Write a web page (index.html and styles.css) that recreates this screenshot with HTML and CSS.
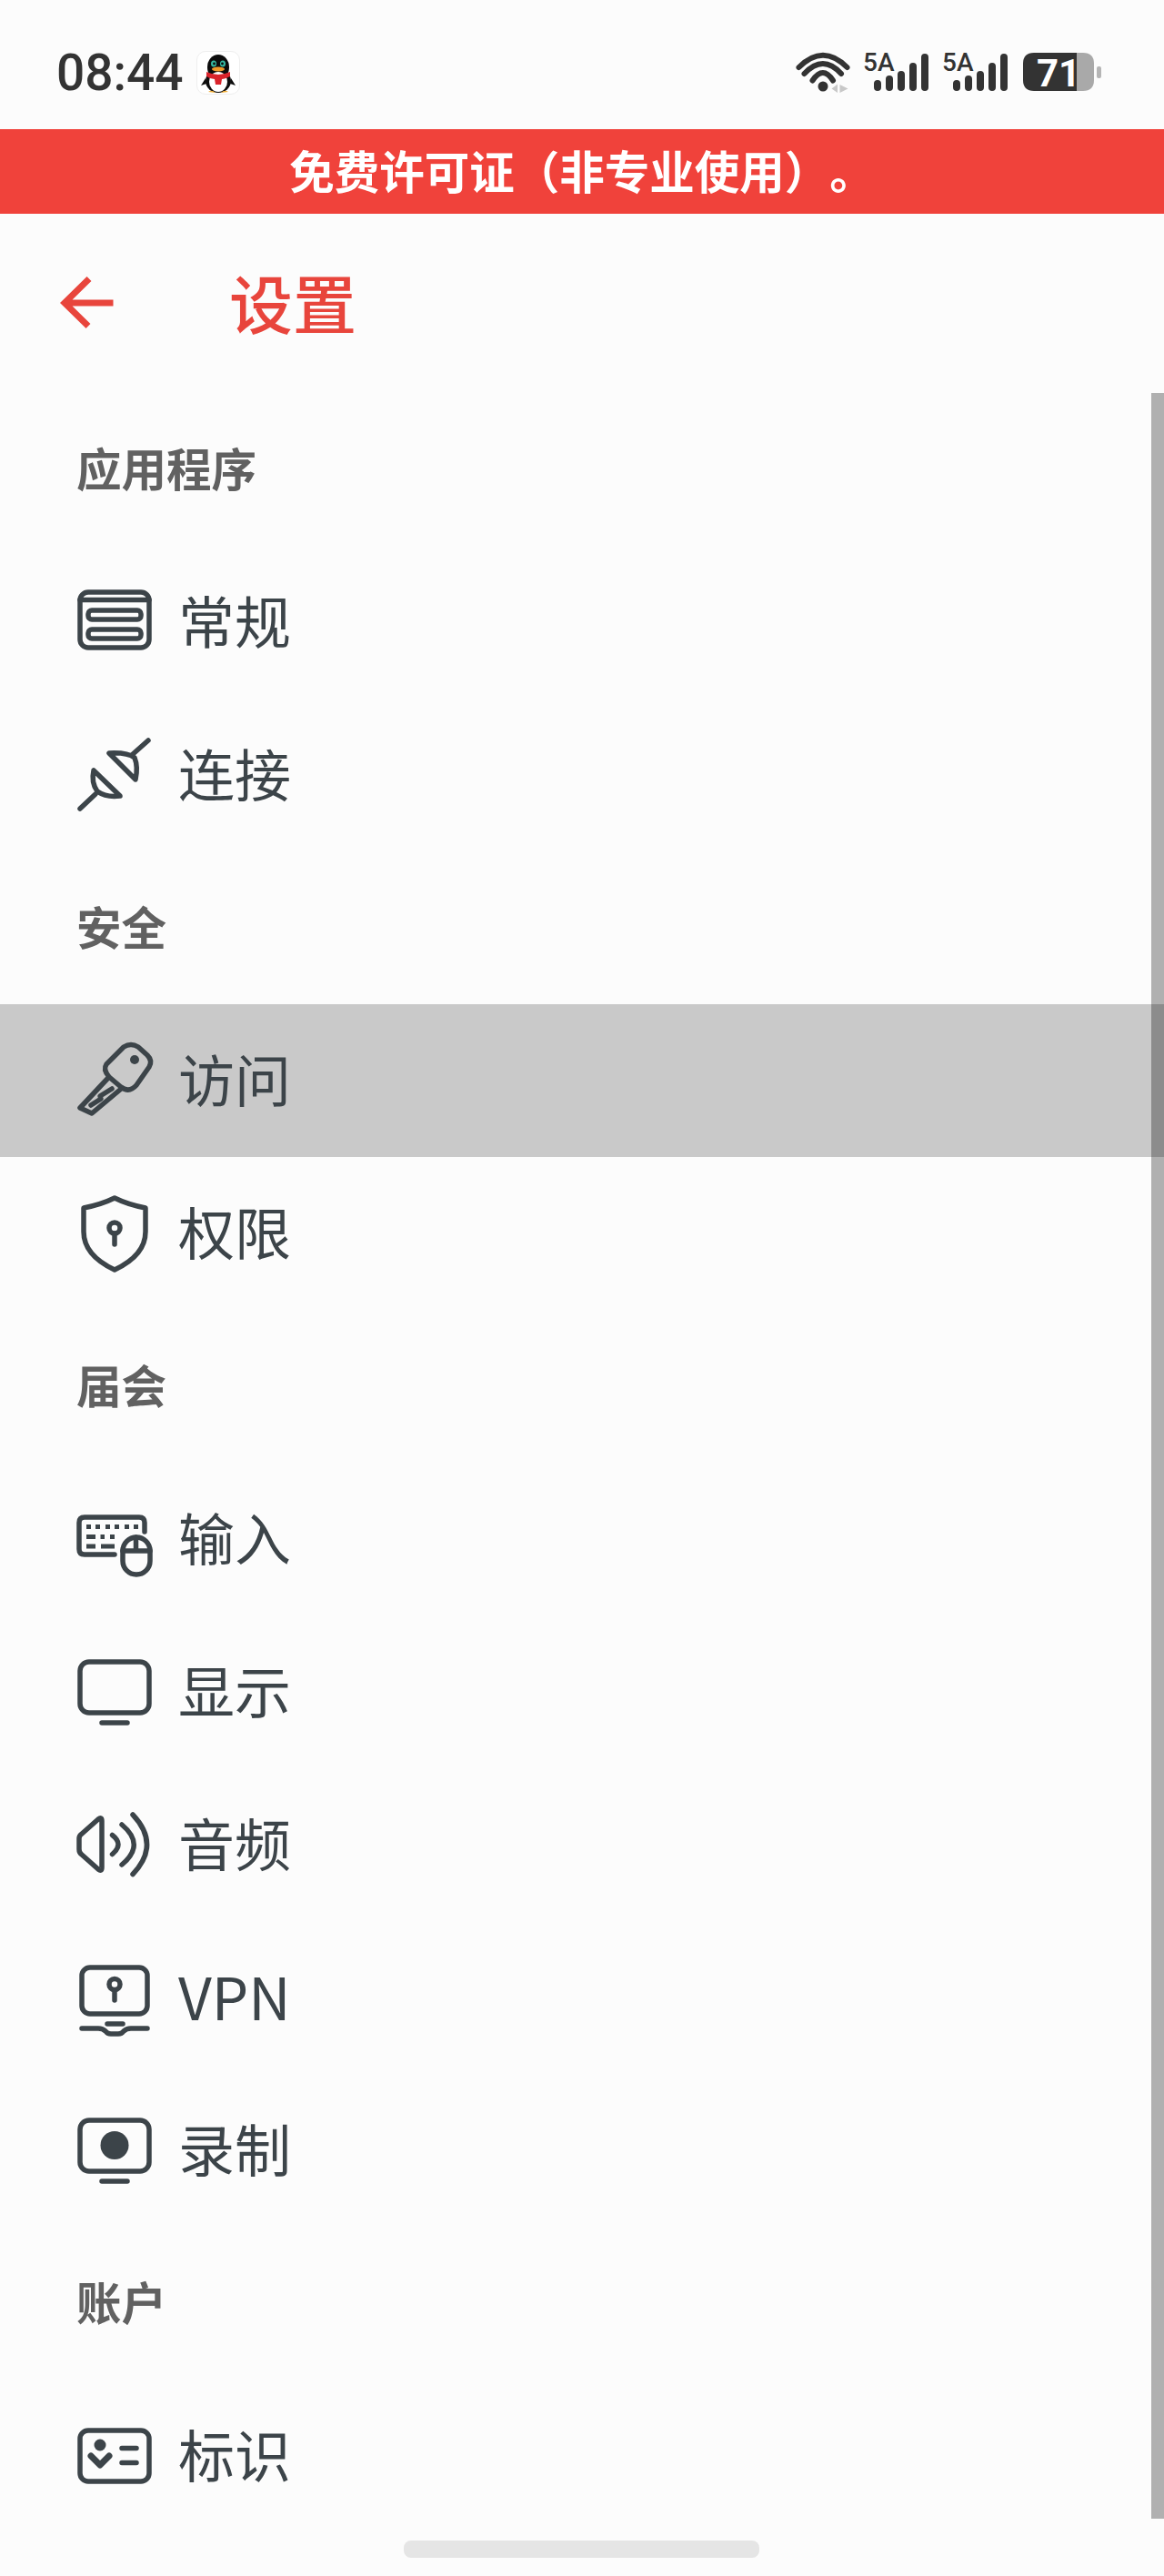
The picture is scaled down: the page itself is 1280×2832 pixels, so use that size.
FILE: index.html
```html
<!DOCTYPE html>
<html lang="zh-CN">
<head>
  <meta charset="UTF-8">
  <meta name="viewport" content="width=device-width, initial-scale=1.0">
  <title>设置</title>
  <link rel="stylesheet" href="styles.css">
</head>
<body>
  <div class="statusBar">
    <div class="statusLeft">
      <span class="clock">08:44</span>
      <div class="appBadge">
        <svg width="48" height="48" viewBox="0 0 48 48">
          <ellipse cx="24" cy="18" rx="12" ry="14" fill="#0c0c0c"/>
          <ellipse cx="24" cy="33" rx="14" ry="13" fill="#0c0c0c"/>
          <path d="M10 30 L5 38 L11 36Z M38 30 L43 38 L37 36Z" fill="#0c0c0c"/>
          <ellipse cx="24" cy="34" rx="10" ry="11" fill="#fff"/>
          <ellipse cx="19" cy="14" rx="3" ry="3.5" fill="#35b8a0"/>
          <ellipse cx="29" cy="14" rx="3" ry="3.5" fill="#35b8a0"/>
          <circle cx="19.500" cy="14" r="1.4" fill="#0c0c0c"/>
          <circle cx="28.500" cy="14" r="1.4" fill="#0c0c0c"/>
          <ellipse cx="24" cy="20" rx="7" ry="2.6" fill="#f09a28"/>
          <path d="M11 23 Q24 29 37 23 L37 28 Q31 31 28 31 L27 37 L21 37 L20 31 Q15 31 11 28Z" fill="#d9232b"/>
          <path d="M13 45 Q17 42 21 46Z M27 46 Q31 42 35 45Z" fill="#f2b03a"/>
        </svg>
      </div>
    </div>
    <div class="statusRight">
      <svg class="wifiIcon" width="64" height="60" viewBox="0 0 64 60">
        <g fill="none" stroke="#333" stroke-width="6" stroke-linecap="round">
          <path d="M5.500 24 Q32 -2.600 58.500 24"/>
          <path d="M11.500 31 Q32 9 52 31"/>
          <path d="M20.500 38.500 Q32 21.500 43 38.500"/>
        </g>
        <circle cx="32" cy="45" r="5.500" fill="#333"/>
        <path d="M41.500 47.500 L48 42.500 V52Z M50.500 43 V52 L59.500 47.500Z" fill="#c8c8c8"/>
      </svg>
      <svg class="signalIcon" width="80" height="60" viewBox="0 0 80 60">
        <text class="networkLabel" x="3" y="28">5A</text>
        <g stroke="#333" stroke-width="8" stroke-linecap="round">
          <path d="M19 42 V46 M32 37 V46 M45 32 V46 M58 23 V46 M71 13 V46"/>
        </g>
      </svg>
      <svg class="signalIcon" width="80" height="60" viewBox="0 0 80 60">
        <text class="networkLabel" x="3" y="28">5A</text>
        <g stroke="#333" stroke-width="8" stroke-linecap="round">
          <path d="M19 42 V46 M32 37 V46 M45 32 V46 M58 23 V46 M71 13 V46"/>
        </g>
      </svg>
      <svg class="batteryIcon" width="92" height="60" viewBox="0 0 92 60">
        <path d="M15 8 H62 V50 H15 Q3 50 3 38 V20 Q3 8 15 8Z" fill="#333"/>
        <path d="M62 8 H69 Q81 8 81 20 V38 Q81 50 69 50 H62Z" fill="#a9a9a9"/>
        <rect x="84" y="23" width="5" height="13" rx="2" fill="#b5b5b5"/>
        <text class="batteryLevel" x="18" y="45">71</text>
      </svg>
    </div>
  </div>

  <div class="licenseBanner">免费许可证（非专业使用）。</div>

  <div class="pageHeader">
    <svg class="backArrow" width="72" height="72" viewBox="0 0 72 72">
      <path d="M64.500 35 H11 M38 8.500 L11 35 L37 60.500" fill="none" stroke="#e8453c" stroke-width="7"/>
    </svg>
    <h1 class="pageTitle">设置</h1>
  </div>

  <div class="settingsList">
    <div class="sectionLabel">应用程序</div>

    <div class="settingsRow">
      <svg class="icon" viewBox="0 0 96 96">
        <rect x="10" y="15" width="76" height="61" rx="9"/>
        <path d="M10 23.500 H86"/>
        <rect x="19" y="35" width="58" height="10" rx="4"/>
        <rect x="19" y="56" width="58" height="10" rx="4"/>
      </svg>
      <span>常规</span>
    </div>

    <div class="settingsRow">
      <svg class="icon" viewBox="0 0 96 96">
        <path d="M42 24 Q62 23 70 29 Q74 39 71 53Z"/>
        <path d="M85 10 L67 26"/>
        <path d="M25 43 Q22 56 29 66 Q39 73 54 71Z"/>
        <path d="M10 85 L27 69"/>
      </svg>
      <span>连接</span>
    </div>

    <div class="sectionLabel">安全</div>

    <div class="settingsRow selected">
      <svg class="icon" viewBox="0 0 96 96">
        <path d="M58 11 Q66 6 74 11 L84 20 Q90 26 86 33 L72 53 Q64 62 55 55 L42 44 Q35 36 39 30Z"/>
        <circle class="solid" cx="70" cy="25" r="5"/>
        <path d="M40 46 L10 78 L23 84 L54 58"/>
        <path d="M22 75 L33 68 L32 65 L45 57"/>
      </svg>
      <span>访问</span>
    </div>

    <div class="settingsRow">
      <svg class="icon" viewBox="0 0 96 96">
        <path d="M48 9 Q62 16 82 20 V46 Q82 72 48 88 Q14 72 14 46 V20 Q34 16 48 9Z"/>
        <circle cx="48" cy="42" r="6"/>
        <path d="M48 48 V60"/>
      </svg>
      <span>权限</span>
    </div>

    <div class="sectionLabel">届会</div>

    <div class="settingsRow">
      <svg class="icon" viewBox="0 0 96 96">
        <path d="M81 40 V30 Q81 24 75 24 H15 Q9 24 9 30 V59 Q9 65 15 65 H48"/>
        <path class="thin" d="M17 34.500 H22 M27 34.500 H32 M38 34.500 H43 M48 34.500 H53 M59 34.500 H64 M69 34.500 H74"/>
        <path class="thin" d="M17 45.500 H27 M32.500 45.500 H37 M43 45.500 H48"/>
        <path class="thin" d="M17 56 H27 M33 56 H48"/>
        <rect x="57" y="46" width="30" height="41" rx="15"/>
        <path d="M57 61 H87 M71.500 46 V61"/>
      </svg>
      <span>输入</span>
    </div>

    <div class="settingsRow">
      <svg class="icon" viewBox="0 0 96 96">
        <rect x="10" y="15" width="76" height="56" rx="10"/>
        <path d="M34 82 H62"/>
      </svg>
      <span>显示</span>
    </div>

    <div class="settingsRow">
      <svg class="icon" viewBox="0 0 96 96">
        <path d="M34 22 V73 Q34 78 30 75 L12 59 Q9 57 9 53 V41 Q9 38 12 36 L30 20 Q34 17 34 22Z"/>
        <path d="M45.500 37.500 Q58.500 47.500 45.500 58.500"/>
        <path d="M56 26 Q82.500 48 56 70"/>
        <path d="M68 15 Q99 48 68 80.500"/>
      </svg>
      <span>音频</span>
    </div>

    <div class="settingsRow">
      <svg class="icon" viewBox="0 0 96 96">
        <rect x="12" y="15" width="72" height="51" rx="9"/>
        <circle cx="48" cy="33.500" r="6"/>
        <path d="M48 40 V51"/>
        <path d="M40 77 H57"/>
        <path d="M12 82 H30 Q35 82 38 85 Q40 88 44 88 H52 Q56 88 58 85 Q61 82 66 82 H84"/>
      </svg>
      <span class="latinLabel">VPN</span>
    </div>

    <div class="settingsRow">
      <svg class="icon" viewBox="0 0 96 96">
        <rect x="10" y="15" width="76" height="56" rx="10"/>
        <circle class="solid" cx="48" cy="42.500" r="15.500"/>
        <path d="M34 82 H62"/>
      </svg>
      <span>录制</span>
    </div>

    <div class="sectionLabel">账户</div>

    <div class="settingsRow">
      <svg class="icon" viewBox="0 0 96 96">
        <rect x="10" y="20" width="76" height="56" rx="9"/>
        <circle class="solid" cx="32" cy="36" r="6.500"/>
        <path class="bold" d="M22 48 L32 58 L42 48"/>
        <path d="M56 39.500 H72 M56 55.500 H72"/>
      </svg>
      <span>标识</span>
    </div>

    <div class="scrollTrack"></div>
  </div>

  <div class="homeBar"></div>
</body>
</html>
```

FILE: styles.css
```css
* {
  box-sizing: border-box;
}
html, body {
  height: 2832px;
  overflow: hidden;
}
body {
  margin: 0;
  background-color: #fcfcfc;
  font-family: "Noto Sans CJK SC", "Noto Sans", sans-serif;
}

/* status bar */
.statusBar {
  height: 142px;
  padding: 18px 66px 0 62px;
  display: flex;
  justify-content: space-between;
  align-items: center;
}
.statusLeft {
  display: flex;
  align-items: center;
  gap: 14px;
}
.clock {
  font-family: Roboto, sans-serif;
  font-size: 55px;
  font-weight: 500;
  line-height: 60px;
  color: #333;
}
.appBadge {
  width: 48px;
  height: 48px;
  background-color: #fff;
  border: 1px solid #eee;
  border-radius: 10px;
}
.appBadge svg {
  display: block;
  margin: -1px;
}
.statusRight {
  display: flex;
  align-items: center;
  gap: 9px;
}
.statusRight .signalIcon + .signalIcon {
  margin-left: -2px;
}
.networkLabel {
  font-family: Roboto, sans-serif;
  font-size: 28px;
  font-weight: 500;
  fill: #333;
}
.batteryLevel {
  font-family: Roboto, sans-serif;
  font-size: 42px;
  font-weight: 700;
  fill: #fff;
}

.licenseBanner {
  height: 93px;
  background-color: #f0423b;
  color: #fff;
  font-size: 49.5px;
  font-weight: 700;
  line-height: 89px;
  text-align: center;
  text-spacing-trim: space-all;
}

.pageHeader {
  height: 197px;
  padding-left: 60px;
  display: flex;
  align-items: center;
  gap: 120px;
}
.pageTitle {
  margin: 0 0 3px;
  color: #e8453c;
  font-size: 70px;
  font-weight: 500;
  line-height: 80px;
}

/* settings list */
.settingsList {
  position: relative;
}
.sectionLabel {
  height: 168px;
  padding: 0 0 6px 84px;
  display: flex;
  align-items: center;
  color: #616161;
  font-size: 49.5px;
  font-weight: 700;
}
.settingsRow {
  height: 168px;
  padding-left: 78px;
  display: flex;
  align-items: center;
  gap: 22px;
  color: #3c4449;
  font-size: 62px;
}
.settingsRow span {
  margin-bottom: 7px;
}
.settingsRow .latinLabel {
  font-size: 64px;
}
.settingsRow.selected {
  background-color: #c9c9c9;
}
.icon {
  width: 96px;
  height: 96px;
  flex-shrink: 0;
  fill: none;
  stroke: #3c4449;
  stroke-width: 5.5;
  stroke-linecap: round;
  stroke-linejoin: round;
}
.icon .solid {
  fill: #3c4449;
  stroke: none;
}
.icon .thin {
  stroke-width: 5;
  stroke-linecap: butt;
}
.icon .bold {
  stroke-width: 7;
}
.scrollTrack {
  position: absolute;
  top: 0;
  right: 0;
  width: 14px;
  height: 2337px;
  background-color: rgba(0, 0, 0, 0.3);
}

.homeBar {
  width: 391px;
  height: 19px;
  margin: 9px 0 0 444px;
  background-color: #e5e5e5;
  border-radius: 8px;
}
```
